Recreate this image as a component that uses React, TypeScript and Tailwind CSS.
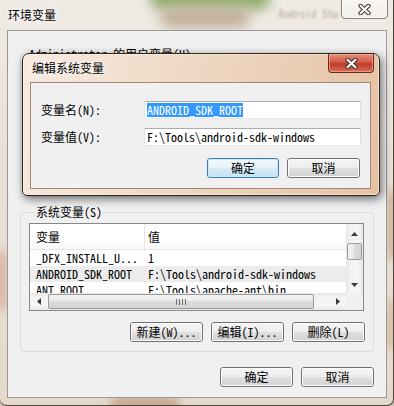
import React from "react";

const FONT = "font-['Noto_Sans_Mono_CJK_SC','Noto_Sans_CJK_SC','Liberation_Mono',monospace]";

function XGlyph() {
  return (
    <svg width="13" height="11" viewBox="0 0 13 11">
      <path d="M2.5 1.8 L10.5 9.2 M10.5 1.8 L2.5 9.2" stroke="#3a3330" strokeWidth="4.2" strokeLinecap="round" />
      <path d="M2.5 1.8 L10.5 9.2 M10.5 1.8 L2.5 9.2" stroke="#ffffff" strokeWidth="2.2" strokeLinecap="round" />
    </svg>
  );
}

function Tri({ dir }: { dir: "up" | "down" | "left" | "right" }) {
  if (dir === "up")
    return (
      <svg width="7" height="4" viewBox="0 0 7 4">
        <polygon points="0,4 3.5,0 7,4" fill="#3c3c3c" />
      </svg>
    );
  if (dir === "down")
    return (
      <svg width="7" height="4" viewBox="0 0 7 4">
        <polygon points="0,0 7,0 3.5,4" fill="#3c3c3c" />
      </svg>
    );
  if (dir === "left")
    return (
      <svg width="4" height="7" viewBox="0 0 4 7">
        <polygon points="4,0 4,7 0,3.5" fill="#3c3c3c" />
      </svg>
    );
  return (
    <svg width="4" height="7" viewBox="0 0 4 7">
      <polygon points="0,0 0,7 4,3.5" fill="#3c3c3c" />
    </svg>
  );
}

function Btn({ children, className = "", def = false }: { children: React.ReactNode; className?: string; def?: boolean }) {
  return (
    <div className={`h-[20px] rounded-[3px] border ${def ? "border-[#3c7fb1]" : "border-[#707070]"} ${className}`}>
      <div
        className={`flex h-full items-center justify-center rounded-[2px] border text-[12px] leading-[14px] text-black ${
          def
            ? "border-[#c8e8f9] bg-[linear-gradient(to_bottom,#f2f9fd_0%,#e6f2fa_50%,#d6ebf7_50%,#c9e3f4_100%)]"
            : "border-[#fcfcfc] bg-[linear-gradient(to_bottom,#f4f4f4_0%,#ededed_50%,#e0e0e0_50%,#d3d3d3_100%)]"
        }`}
      >
        {children}
      </div>
    </div>
  );
}

const rows: [string, string][] = [
  ["_DFX_INSTALL_U...", "1"],
  ["ANDROID_SDK_ROOT", "F:\\Tools\\android-sdk-windows"],
  ["ANT_ROOT", "F:\\Tools\\apache-ant\\bin"],
];

function ListView() {
  return (
    <div className="flex h-[88px] w-[335px] flex-col border border-[#828790] bg-white">
      <div className="flex h-[69px]">
        <div className="flex flex-1 flex-col overflow-hidden">
          <div className="flex h-[26px] shrink-0 items-center border-b border-[#e5e5e5] bg-[linear-gradient(to_bottom,#ffffff_0%,#ffffff_60%,#f7f8fa_100%)]">
            <div className="flex h-full w-[115px] items-center border-r border-[#e5e5e5] pl-[6px] text-[12px] leading-[14px]">变量</div>
            <div className="pl-[3px] text-[12px] leading-[14px]">值</div>
          </div>
          {rows.map((r, i) => (
            <div key={i} className={`flex h-[16px] shrink-0 items-center whitespace-nowrap text-[12px] leading-[14px] ${i === 1 ? "bg-[#ececec]" : "bg-white"}`}>
              <div className="w-[118px] pl-[6px]">{r[0]}</div>
              <div>{r[1]}</div>
            </div>
          ))}
        </div>
        <div className="flex w-[17px] flex-col bg-[linear-gradient(to_right,#e6e6e6,#f5f5f5_30%,#f5f5f5_70%,#e9e9e9)]">
          <div className="flex h-[17px] items-center justify-center pt-[3px]">
            <Tri dir="up" />
          </div>
          <div className="mx-[1px] mt-[2px] h-[17px] rounded-[2px] border border-[#9a9a9a] bg-[linear-gradient(to_right,#f4f4f4,#e8e8e8_50%,#dcdcdc_50%,#d4d4d4)]" />
          <div className="flex-1" />
          <div className="flex h-[17px] items-center justify-center">
            <Tri dir="down" />
          </div>
        </div>
      </div>
      <div className="flex h-[17px]">
        <div className="flex flex-1 items-center bg-[linear-gradient(to_bottom,#e6e6e6,#f5f5f5_30%,#f5f5f5_70%,#e9e9e9)]">
          <div className="flex h-full w-[17px] items-center justify-center">
            <Tri dir="left" />
          </div>
          <div className="ml-[1px] flex h-[15px] w-[266px] items-center justify-center rounded-[2px] border border-[#9a9a9a] bg-[linear-gradient(to_bottom,#f4f4f4,#e8e8e8_50%,#dcdcdc_50%,#d4d4d4)]">
            <div className="flex gap-[2px]">
              <div className="h-[6px] w-px bg-[#6f6f6f]" />
              <div className="h-[6px] w-px bg-[#6f6f6f]" />
              <div className="h-[6px] w-px bg-[#6f6f6f]" />
              <div className="h-[6px] w-px bg-[#6f6f6f]" />
            </div>
          </div>
          <div className="flex-1" />
          <div className="flex h-full w-[17px] items-center justify-center">
            <Tri dir="right" />
          </div>
        </div>
        <div className="w-[17px] bg-[#f0f0f0]" />
      </div>
    </div>
  );
}

export default function App() {
  return (
    <div className={`relative h-[406px] w-[394px] overflow-hidden bg-[#cdbfb0] text-black ${FONT}`}>
      {/* glass frame backdrop */}
      <div className="absolute inset-0 overflow-hidden rounded-b-[7px] border-r border-b border-[#4a423b] bg-[linear-gradient(180deg,#efeae4_0%,#e9e1d7_40%,#e5d9cc_100%)]">
        <div className="absolute left-[150px] top-[-12px] h-[22px] w-[120px] rounded-full bg-[#94ad72] blur-[6px]" />
        <div className="absolute left-[160px] top-[8px] h-[20px] w-[90px] rounded-full bg-[#c2b29c] blur-[6px]" />
        <div className="absolute left-[278px] top-[5px] text-[11px] text-[#b7ab9f] blur-[1px]">Android Stu</div>
        <div className="absolute left-[-6px] top-[250px] h-[60px] w-[14px] rounded-full bg-[#dcb9aa] blur-[4px]" />
        <div className="absolute right-[-6px] top-[190px] h-[70px] w-[14px] rounded-full bg-[#d2b9a3] blur-[4px]" />
        <div className="absolute right-[-6px] top-[300px] h-[50px] w-[14px] rounded-full bg-[#d8c0aa] blur-[4px]" />
        <div className="absolute bottom-[-6px] left-[110px] h-[14px] w-[70px] rounded-full bg-[#c4a88e] blur-[4px]" />
      </div>

      {/* outer window */}
      <div className="relative flex h-full flex-col">
        <div className="relative h-[30px] shrink-0">
          <div className="pl-[8px] pt-[7px] font-['Noto_Sans_CJK_SC',sans-serif] text-[12px] leading-[16px] [text-shadow:0_0_6px_#fff,0_0_10px_#fff]">
            环境变量
          </div>
          <div className="absolute right-[6px] top-[-1px] flex h-[20px] w-[47px] items-center justify-center rounded-b-[4px] border border-[#8a8178] bg-[linear-gradient(to_bottom,rgba(255,255,255,0.55),rgba(255,255,255,0.25))] shadow-[inset_0_0_0_1px_rgba(255,255,255,0.6)]">
            <XGlyph />
          </div>
        </div>
        <div className="ml-[7px] h-[368px] w-[380px] border border-[#9c9893] bg-[#f0f0f0]">
          <div className="flex flex-col">
            {/* user variables (covered by dialog) */}
            <fieldset className="ml-[12px] mt-[16px] h-[150px] w-[354px] rounded-[3px] border border-[#d5dfe5]">
              <legend className="ml-[7px] px-[1px] text-[12px] leading-[14px]">Administrator 的用户变量(U)</legend>
            </fieldset>
            {/* system variables */}
            <fieldset className="ml-[12px] mt-[8px] w-[354px] rounded-[3px] border border-[#d5dfe5] px-[8px] pb-[9px]">
              <legend className="ml-[6px] px-[1px] text-[12px] leading-[14px]">系统变量(S)</legend>
              <div className="mt-[4px]">
                <ListView />
              </div>
              <div className="mt-[11px] flex justify-end gap-[8px]">
                <Btn className="w-[73px]">新建(W)...</Btn>
                <Btn className="w-[73px]">编辑(I)...</Btn>
                <Btn className="w-[73px]">删除(L)</Btn>
              </div>
            </fieldset>
            <div className="mt-[15px] flex justify-end gap-[8px] pr-[12px]">
              <Btn className="w-[73px]">确定</Btn>
              <Btn className="w-[73px]">取消</Btn>
            </div>
          </div>
        </div>
      </div>

      {/* edit dialog */}
      <div className="absolute left-[22px] top-[53px] h-[143px] w-[358px] rounded-t-[7px] rounded-b-[5px] border border-[#2f2620] bg-[linear-gradient(100deg,#f6eadf_0%,#efd8c4_45%,#e6c2a3_100%)] shadow-[2px_3px_10px_rgba(0,0,0,0.55),inset_0_0_0_1px_rgba(255,240,225,0.6)]">
        <div className="relative h-[28px]">
          <div className="pl-[9px] pt-[6px] font-['Noto_Sans_CJK_SC',sans-serif] text-[12px] leading-[16px] [text-shadow:0_0_6px_#fff,0_0_10px_#fff]">
            编辑系统变量
          </div>
          <div className="absolute right-[5px] top-0 flex h-[19px] w-[46px] items-center justify-center rounded-b-[4px] border border-t-0 border-[#6a2a22] bg-[linear-gradient(to_bottom,#e7907a_0%,#d35a45_45%,#c0392b_55%,#d8705a_100%)] shadow-[inset_0_0_0_1px_rgba(255,200,180,0.5)]">
            <XGlyph />
          </div>
        </div>
        <div className="ml-[7px] h-[107px] w-[341px] border border-[#a08878] bg-[#f0f0f0]">
          <div className="flex flex-col pl-[10px] pt-[18px]">
            <div className="flex h-[18px] items-center">
              <div className="w-[103px] text-[12px] leading-[14px]">变量名(N):</div>
              <div className="flex h-[18px] w-[217px] items-center border border-[#abadb3] border-b-[#e3e9ef] border-l-[#e2e3ea] border-r-[#dbdfe6] bg-white pl-[2px]">
                <span className="bg-[#3399ff] text-[12px] leading-[14px] text-white">ANDROID_SDK_ROOT</span>
              </div>
            </div>
            <div className="mt-[9px] flex h-[18px] items-center">
              <div className="w-[103px] text-[12px] leading-[14px]">变量值(V):</div>
              <div className="flex h-[18px] w-[217px] items-center border border-[#abadb3] border-b-[#e3e9ef] border-l-[#e2e3ea] border-r-[#dbdfe6] bg-white pl-[2px]">
                <span className="text-[12px] leading-[14px]">F:\Tools\android-sdk-windows</span>
              </div>
            </div>
            <div className="mt-[12px] flex justify-end gap-[8px] pr-[10px]">
              <Btn className="w-[72px]" def>
                确定
              </Btn>
              <Btn className="w-[73px]">取消</Btn>
            </div>
          </div>
        </div>
      </div>
    </div>
  );
}
